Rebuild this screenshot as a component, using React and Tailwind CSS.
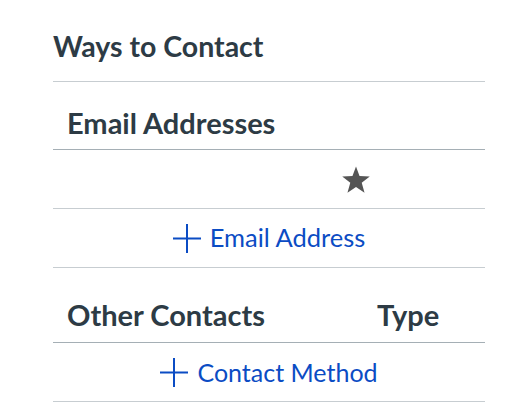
import React from "react";

function Plus() {
  return (
    <svg width="28" height="29" viewBox="0 0 28 29" className="shrink-0">
      <path d="M14 0 V29 M0 14.5 H28" stroke="#0b4cc4" strokeWidth="2" fill="none" />
    </svg>
  );
}

function Star() {
  return (
    <svg width="30" height="28" viewBox="0 0 24 23">
      <path
        d="M12 0.5 L14.9 8.3 L23.3 8.6 L16.7 13.8 L19 21.9 L12 17.2 L5 21.9 L7.3 13.8 L0.7 8.6 L9.1 8.3 Z"
        fill="#555555"
      />
    </svg>
  );
}

export default function App() {
  return (
    <div
      className="min-h-[412px] w-[522px] bg-white pl-[53px] text-[#2d3b45]"
      style={{ fontFamily: "Lato, 'Open Sans', sans-serif" }}
    >
      <div className="w-[432px]">
        <div className="flex h-[82px] items-end border-b border-[#c7cdd1] pb-[21px]">
          <h2 className="text-[28.5px] font-bold leading-none">Ways to Contact</h2>
        </div>
        <div className="flex h-[68px] items-end border-b border-[#a5afb5] pb-[12px] pl-[14px]">
          <span className="text-[29px] font-bold leading-none">Email Addresses</span>
        </div>
        <div className="flex h-[59px] items-center border-b border-[#c7cdd1] pl-[288px] pt-[2px]">
          <Star />
        </div>
        <div className="flex h-[59px] items-center justify-center gap-[9px] border-b border-[#c7cdd1]">
          <Plus />
          <span className="text-[25.5px] leading-none text-[#0b4cc4]">Email Address</span>
        </div>
        <div className="flex h-[75px] items-end border-b border-[#a5afb5] pb-[13px] pl-[14px]">
          <span className="w-[310px] text-[29px] font-bold leading-none">Other Contacts</span>
          <span className="text-[29px] font-bold leading-none">Type</span>
        </div>
        <div className="flex h-[59px] items-center justify-center gap-[9px] border-b border-[#c7cdd1]">
          <Plus />
          <span className="text-[25px] leading-none text-[#0b4cc4]">Contact Method</span>
        </div>
      </div>
    </div>
  );
}
